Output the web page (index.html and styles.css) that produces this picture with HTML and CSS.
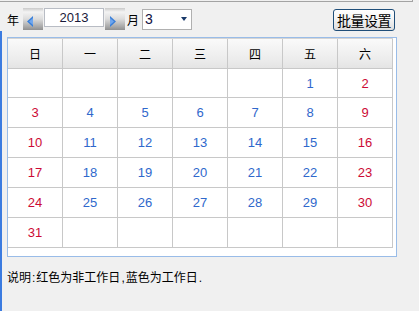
FILE: index.html
```html
<!DOCTYPE html>
<html lang="zh-CN">
<head>
<meta charset="utf-8">
<title>批量设置</title>
<link rel="stylesheet" href="styles.css">
</head>
<body>
<div class="topframe"></div>
<div class="toolbar">
  <span class="lbl">年</span>
  <div class="navbtn"><svg width="7" height="11" viewBox="0 0 7 11"><polygon points="6,0 6,11 0,5.5" fill="#3a7fd8"/><polygon points="6,2 6,9 2,5.5" fill="#6fa6ee"/></svg></div>
  <div class="yearbox">2013</div>
  <div class="navbtn navbtn-next"><svg width="7" height="11" viewBox="0 0 7 11"><polygon points="0,0 0,11 6,5.5" fill="#3a7fd8"/><polygon points="0,2 0,9 4,5.5" fill="#6fa6ee"/></svg></div>
  <span class="lbl lbl-month">月</span>
  <div class="select"><span class="sel-val">3</span><span class="arrow"></span></div>
  <div class="batch">批量设置</div>
</div>
<div class="main">
  <div class="calendar">
    <table class="cal">
      <thead>
        <tr><th>日</th><th>一</th><th>二</th><th>三</th><th>四</th><th>五</th><th>六</th></tr>
      </thead>
      <tbody>
        <tr class="r1"><td></td><td></td><td></td><td></td><td></td><td class="wd">1</td><td class="we">2</td></tr>
        <tr><td class="we">3</td><td class="wd">4</td><td class="wd">5</td><td class="wd">6</td><td class="wd">7</td><td class="wd">8</td><td class="we">9</td></tr>
        <tr><td class="we">10</td><td class="wd">11</td><td class="wd">12</td><td class="wd">13</td><td class="wd">14</td><td class="wd">15</td><td class="we">16</td></tr>
        <tr><td class="we">17</td><td class="wd">18</td><td class="wd">19</td><td class="wd">20</td><td class="wd">21</td><td class="wd">22</td><td class="we">23</td></tr>
        <tr><td class="we">24</td><td class="wd">25</td><td class="wd">26</td><td class="wd">27</td><td class="wd">28</td><td class="wd">29</td><td class="we">30</td></tr>
        <tr><td class="we">31</td><td></td><td></td><td></td><td></td><td></td><td></td></tr>
      </tbody>
    </table>
  </div>
  <p class="note">说明<span class="p">:</span>红色为非工作日<span class="p">,</span>蓝色为工作日<span class="p">.</span></p>
</div>
</body>
</html>
```

FILE: styles.css
```css
html, body {
  margin: 0;
  padding: 0;
}
body {
  background: #f0f0f0;
  font-family: "Noto Sans CJK SC", "Liberation Sans", sans-serif;
  font-size: 12px;
  color: #000;
  height: 311px;
  overflow: hidden;
}
.topframe {
  width: 412px;
  height: 1px;
  border-right: 1px solid #a3a3a3;
  border-bottom: 1px solid #a3a3a3;
}
.toolbar {
  display: flex;
  align-items: flex-start;
  height: 29px;
  padding: 0 24px 0 7px;
}
.lbl {
  display: block;
  width: 12px;
  height: 12px;
  line-height: 12px;
  font-size: 12px;
  margin-top: 12px;
  margin-right: 4px;
}
.lbl-month {
  margin-left: 2px;
  margin-right: 3px;
}
.navbtn {
  width: 20px;
  height: 22px;
  margin-top: 6px;
  box-sizing: border-box;
  display: flex;
  align-items: center;
  padding: 4px 0 0 4px;
  background: linear-gradient(to bottom, #c9c9c9 0%, #f3f3f3 18%, #dcdcdc 50%, #a8a8a8 85%, #8f8f8f 100%);
}
.navbtn-next {
  margin-left: 1px;
  padding-left: 5px;
}
.yearbox {
  width: 60px;
  height: 19px;
  margin: 6px 0 0 1px;
  box-sizing: border-box;
  border: 1px solid #b8bcc4;
  background: #fff;
  text-align: center;
  font-family: "Liberation Sans", sans-serif;
  font-size: 13px;
  line-height: 17px;
  color: #1a1a3a;
}
.select {
  width: 50px;
  height: 21px;
  margin-top: 7px;
  box-sizing: border-box;
  border: 1px solid #b0b0b0;
  background: #fff;
  display: flex;
  align-items: center;
  justify-content: space-between;
  padding: 0 4px 0 2px;
}
.sel-val {
  font-family: "Liberation Sans", sans-serif;
  font-size: 14px;
  line-height: 19px;
  color: #101040;
}
.arrow {
  width: 0;
  height: 0;
  border-left: 3px solid transparent;
  border-right: 3px solid transparent;
  border-top: 4px solid #1a3a6a;
  margin-top: -1px;
}
.batch {
  margin-left: auto;
  margin-top: 7px;
  width: 62px;
  height: 22px;
  box-sizing: border-box;
  border: 1px solid #1f4e79;
  border-radius: 3px;
  background: linear-gradient(to bottom, #ffffff 0%, #f4f4f4 45%, #dedede 100%);
  font-size: 14px;
  line-height: 20px;
  text-align: center;
  letter-spacing: -0.5px;
}
.main {
  border-left: 2px solid #3b7be0;
  padding: 6px 0 0 5px;
  height: 280px;
  box-sizing: border-box;
}
.calendar {
  width: 385px;
  background: #fff;
  border: 1px solid #99bce8;
  padding: 0 3px 8px 0;
}
.cal {
  width: 385px;
  border-collapse: separate;
  border-spacing: 0;
  border-top: 1px solid #d4d4d4;
  table-layout: fixed;
}
.cal th, .cal td {
  width: 54px;
  padding: 0;
  border-right: 1px solid #c8c8c8;
  border-bottom: 1px solid #c8c8c8;
  text-align: center;
  vertical-align: middle;
}
.cal th {
  height: 29px;
  font-weight: normal;
  font-size: 12px;
  background: linear-gradient(to bottom, #fafafa 0%, #ececec 70%, #e4e4e4 100%);
}
.cal td {
  height: 29px;
  font-family: "Liberation Sans", sans-serif;
  font-size: 13px;
}
.cal tr.r1 td {
  height: 28px;
}
.cal td.we {
  color: #cc0a35;
}
.cal td.wd {
  color: #2f68cc;
}
.note {
  margin: 13px 0 0 0;
  font-size: 12px;
  line-height: 14px;
}
.note .p {
  font-family: "Liberation Sans", sans-serif;
  margin: 0 1px;
}
```
